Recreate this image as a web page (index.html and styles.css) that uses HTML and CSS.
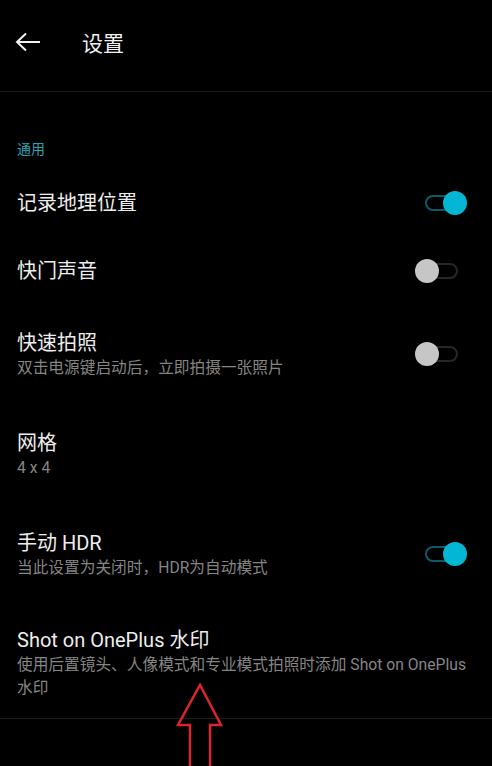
FILE: index.html
```html
<!DOCTYPE html>
<html lang="zh-CN">
<head>
  <meta charset="UTF-8">
  <meta name="viewport" content="width=device-width, initial-scale=1.0">
  <title>设置</title>
  <link rel="stylesheet" href="styles.css">
</head>
<body>
  <!-- 顶栏 -->
  <div class="appbar">
    <svg class="back" width="26" height="20" viewBox="0 0 26 20">
      <path d="M2 10 H25 M11 1.5 L2 10 L11 18.5" fill="none" stroke="#f2f2f2" stroke-width="2"/>
    </svg>
    <div class="appbar-title">设置</div>
  </div>

  <!-- 通用 -->
  <div class="section-label">通用</div>

  <div class="item item-single">
    <div class="item-text">
      <div class="item-title">记录地理位置</div>
    </div>
    <div class="switch on"><span class="track"></span><span class="thumb"></span></div>
  </div>

  <div class="item item-single">
    <div class="item-text">
      <div class="item-title">快门声音</div>
    </div>
    <div class="switch"><span class="track"></span><span class="thumb"></span></div>
  </div>

  <div class="item">
    <div class="item-text">
      <div class="item-title">快速拍照</div>
      <div class="item-sub">双击电源键启动后，立即拍摄一张照片</div>
    </div>
    <div class="switch"><span class="track"></span><span class="thumb"></span></div>
  </div>

  <div class="item">
    <div class="item-text">
      <div class="item-title">网格</div>
      <div class="item-sub">4 x 4</div>
    </div>
  </div>

  <div class="item">
    <div class="item-text">
      <div class="item-title">手动 HDR</div>
      <div class="item-sub">当此设置为关闭时，HDR为自动模式</div>
    </div>
    <div class="switch on"><span class="track"></span><span class="thumb"></span></div>
  </div>

  <div class="item item-last">
    <div class="item-text">
      <div class="item-title">Shot on OnePlus 水印</div>
      <div class="item-sub">使用后置镜头、人像模式和专业模式拍照时添加 Shot on OnePlus 水印</div>
    </div>
  </div>

  <!-- 红色箭头标注 -->
  <svg class="mark-arrow" width="50" height="90" viewBox="0 0 50 90">
    <path d="M15 95 V44 H3 L25 4 L46 44 H35 V95" fill="none" stroke="#d9262c" stroke-width="2.5" stroke-linejoin="miter"/>
  </svg>
</body>
</html>
```

FILE: styles.css
```css
/* 基本 */
body {
  margin: 0;
  padding: 0;
  background-color: #000;
  color: #ececec;
  font-family: Roboto, "Noto Sans CJK SC", sans-serif;
  height: 766px;
  overflow: hidden;
  position: relative;
}

/* 顶栏 */
.appbar {
  height: 84px;
  padding-bottom: 7px;
  display: flex;
  align-items: center;
  border-bottom: 1px solid #1b1b1b;
}

.back {
  margin-left: 15px;
  display: block;
}

.appbar-title {
  margin-left: 41px;
  font-size: 21px;
  color: #f0f0f0;
}

/* 分组标题 */
.section-label {
  margin: 47px 0 9px;
  padding-left: 17px;
  font-size: 14px;
  line-height: 20px;
  color: #2ba4b6;
}

/* 设置项 */
.item {
  display: flex;
  justify-content: space-between;
  align-items: center;
  padding: 25px 25px 25px 17px;
  min-height: 50px;
}

.item-single {
  padding-top: 22px;
  padding-bottom: 20px;
  min-height: 26px;
}

.item-last {
  padding-top: 23px;
  padding-bottom: 19px;
  border-bottom: 1px solid #1b1b1b;
}

.item-title {
  font-size: 20px;
  line-height: 26px;
  color: #ededed;
}

.item-sub {
  font-size: 15.7px;
  line-height: 23px;
  color: #858585;
}

/* 开关 */
.switch {
  position: relative;
  width: 52px;
  height: 24px;
  flex-shrink: 0;
  margin-left: 16px;
}

.switch .track {
  position: absolute;
  left: 10px;
  top: 4px;
  width: 33px;
  height: 16px;
  box-sizing: border-box;
  border: 2px solid #262626;
  border-radius: 8px;
}

.switch .thumb {
  position: absolute;
  left: 0;
  top: 0;
  width: 24px;
  height: 24px;
  border-radius: 50%;
  background-color: #c6c6c6;
}

.switch.on .track {
  border-color: #0d5967;
}

.switch.on .thumb {
  left: 28px;
  background-color: #03b6d4;
}

/* 标注箭头 */
.mark-arrow {
  position: absolute;
  left: 175px;
  top: 681px;
}
```
